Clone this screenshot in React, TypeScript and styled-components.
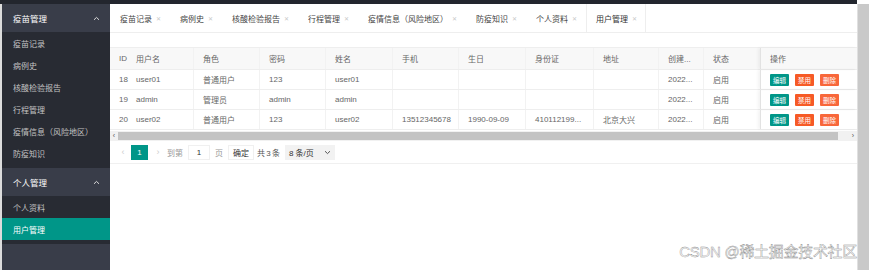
import React from 'react';
import styled, { createGlobalStyle } from 'styled-components';

const GlobalStyle = createGlobalStyle`
  html, body {
    margin: 0;
    padding: 0;
    background: #fff;
  }
  body {
    font-family: "Liberation Sans", "Noto Sans CJK SC", sans-serif;
    font-size: 8px;
    color: #666;
  }
`;

const Page = styled.div`
  width: 869px;
  height: 270px;
  overflow: hidden;
  display: flex;
  flex-direction: column;
  background: #fff;
`;

const TopBar = styled.div`
  height: 4px;
  margin-right: 12px;
  background: #23262e;
  flex: none;
`;

const Body = styled.div`
  flex: 1;
  display: flex;
  min-height: 0;
`;

const Sidebar = styled.div`
  width: 108px;
  border-left: 2px solid #dcdcdc;
  background: #393d49;
  flex: none;
`;

const NavHeader = styled.div`
  height: 28px;
  display: flex;
  align-items: center;
  justify-content: space-between;
  padding: 0 10px 0 11px;
  color: #fff;
  font-size: 8.5px;
  background: #393d49;
`;

const NavList = styled.div`
  background: #282b33;
  padding-bottom: 4px;
`;

const NavItem = styled.div<{ $active?: boolean }>`
  height: 22px;
  display: flex;
  align-items: center;
  padding-left: 11px;
  font-size: 8px;
  color: ${p => (p.$active ? '#fff' : '#c2c2c2')};
  background: ${p => (p.$active ? '#009688' : 'transparent')};
`;

const Main = styled.div`
  position: relative;
  flex: 1;
  display: flex;
  flex-direction: column;
  min-width: 0;
`;

const TabBar = styled.div`
  height: 28px;
  display: flex;
  align-items: stretch;
  border-bottom: 1px solid #eee;
  background: #fff;
`;

const Tab = styled.div<{ $active?: boolean }>`
  display: flex;
  align-items: center;
  gap: 4px;
  padding: 0 8px 0 9px;
  color: ${p => (p.$active ? '#333' : '#444')};
  background: #fff;
  border-left: 1px solid ${p => (p.$active ? '#eee' : 'transparent')};
  border-right: 1px solid ${p => (p.$active ? '#eee' : 'transparent')};
  white-space: nowrap;
`;

const TabClose = styled.span`
  color: #c8c8c8;
  font-size: 6px;
`;

const TableWrap = styled.div`
  margin-top: 14px;
`;

const cols = '25px 58px 66px 66px 67px 66px 67px 68px 65px 45px 57px 97px';

const Row = styled.div<{ $head?: boolean }>`
  display: grid;
  grid-template-columns: ${cols};
  height: ${p => (p.$head ? '21px' : '19px')};
  border-top: ${p => (p.$head ? '1px solid #eee' : 'none')};
  border-bottom: 1px solid #eee;
  background: ${p => (p.$head ? '#f8f8f8' : '#fff')};
`;

const Cell = styled.div<{ $fixed?: boolean; $first?: boolean; $second?: boolean }>`
  display: flex;
  align-items: center;
  gap: 6px;
  padding-left: ${p => (p.$second ? '1px' : '9px')};
  white-space: nowrap;
  color: #666;
  border-left: ${p =>
    p.$fixed ? '1px solid #e2e2e2' : p.$first || p.$second ? 'none' : '1px solid #f2f2f2'};
  box-shadow: ${p => (p.$fixed ? '-2px 0 3px rgba(0,0,0,0.05)' : 'none')};
`;

const OpBtn = styled.span<{ $color: string }>`
  width: 19px;
  height: 12px;
  display: flex;
  align-items: center;
  justify-content: center;
  background: ${p => p.$color};
  color: #fff;
  font-size: 6.5px;
  border-radius: 1px;
`;

const HScroll = styled.div`
  height: 10px;
  margin-top: 1px;
  display: flex;
  align-items: center;
  background: #f1f1f1;
`;

const ScrollArrow = styled.span`
  width: 8px;
  text-align: center;
  font-size: 7px;
  color: #555;
  line-height: 10px;
`;

const ScrollThumb = styled.div`
  height: 8px;
  width: 720px;
  background: #c3c3c3;
`;

const ScrollTrack = styled.div`
  flex: 1;
`;

const Pager = styled.div`
  height: 22px;
  display: flex;
  align-items: center;
  padding-left: 9px;
  border-bottom: 1px solid #f0f0f0;
  color: #999;
`;

const PagerArrow = styled.span`
  color: #ccc;
  font-size: 9px;
  width: 8px;
  text-align: center;
`;

const PageNum = styled.span`
  width: 17px;
  height: 15px;
  margin: 0 6px 0 4px;
  display: flex;
  align-items: center;
  justify-content: center;
  background: #009688;
  color: #fff;
`;

const PagerText = styled.span<{ $dark?: boolean }>`
  margin: 0 ${p => (p.$dark ? '2px' : '5px')};
  color: ${p => (p.$dark ? '#555' : '#999')};
  word-spacing: ${p => (p.$dark ? '-1px' : 'normal')};
`;

const PagerBox = styled.span`
  width: 22px;
  height: 15px;
  display: flex;
  align-items: center;
  justify-content: center;
  border: 1px solid #f0f0f0;
  box-sizing: border-box;
  color: #333;
`;

const PagerBtn = styled.span`
  width: 26px;
  height: 15px;
  display: flex;
  align-items: center;
  justify-content: center;
  border: 1px solid #f0f0f0;
  box-sizing: border-box;
  color: #333;
  margin-right: 1px;
`;

const Select = styled.span`
  width: 50px;
  height: 15px;
  margin-left: 3px;
  display: flex;
  align-items: center;
  justify-content: space-between;
  padding: 0 4px;
  box-sizing: border-box;
  background: #f2f2f2;
  color: #333;
`;

const VScroll = styled.div`
  width: 12px;
  flex: none;
  background: #c9c9c9;
  border-left: 1px solid #e0e0e0;
  box-sizing: border-box;
`;

const Watermark = styled.div`
  position: absolute;
  right: 0;
  bottom: 9px;
  font-size: 15px;
  font-family: "Liberation Sans", "Noto Sans CJK SC", sans-serif;
  color: rgba(255, 255, 255, 0.85);
  -webkit-text-stroke: 0.4px #888;
  letter-spacing: -0.3px;
  white-space: nowrap;
`;

const Chevron = ({ down }: { down?: boolean }) => (
  <svg width="7" height="5" viewBox="0 0 7 5">
    <path
      d={down ? 'M1 1.2 L3.5 3.6 L6 1.2' : 'M1 3.8 L3.5 1.4 L6 3.8'}
      fill="none"
      stroke={down ? '#555' : '#ddd'}
      strokeWidth="1"
    />
  </svg>
);

const tabs = ['疫苗记录', '病例史', '核酸检验报告', '行程管理', '疫情信息（风险地区）', '防疫知识', '个人资料', '用户管理'];

const heads = ['ID', '用户名', '角色', '密码', '姓名', '手机', '生日', '身份证', '地址', '创建...', '状态'];

const rows = [
  ['18', 'user01', '普通用户', '123', 'user01', '', '', '', '', '2022...', '启用'],
  ['19', 'admin', '管理员', 'admin', 'admin', '', '', '', '', '2022...', '启用'],
  ['20', 'user02', '普通用户', '123', 'user02', '13512345678', '1990-09-09', '410112199...', '北京大兴', '2022...', '启用'],
];

export default function App() {
  return (
    <>
      <GlobalStyle />
      <Page>
        <TopBar />
        <Body>
          <Sidebar>
            <NavHeader>
              <span>疫苗管理</span>
              <Chevron />
            </NavHeader>
            <NavList>
              <NavItem>疫苗记录</NavItem>
              <NavItem>病例史</NavItem>
              <NavItem>核酸检验报告</NavItem>
              <NavItem>行程管理</NavItem>
              <NavItem>疫情信息（风险地区）</NavItem>
              <NavItem>防疫知识</NavItem>
            </NavList>
            <NavHeader>
              <span>个人管理</span>
              <Chevron />
            </NavHeader>
            <NavList>
              <NavItem>个人资料</NavItem>
              <NavItem $active>用户管理</NavItem>
            </NavList>
          </Sidebar>

          <Main>
            <TabBar>
              {tabs.map((t, i) => (
                <Tab key={t} $active={i === tabs.length - 1}>
                  <span>{t}</span>
                  <TabClose>✕</TabClose>
                </Tab>
              ))}
            </TabBar>

            <TableWrap>
              <Row $head>
                {heads.map((h, i) => (
                  <Cell key={h} $first={i === 0} $second={i === 1}>{h}</Cell>
                ))}
                <Cell $fixed>操作</Cell>
              </Row>
              {rows.map(r => (
                <Row key={r[0]}>
                  {r.map((v, i) => (
                    <Cell key={i} $first={i === 0} $second={i === 1}>{v}</Cell>
                  ))}
                  <Cell $fixed>
                    <OpBtn $color="#009688">编辑</OpBtn>
                    <OpBtn $color="#f65a26">禁用</OpBtn>
                    <OpBtn $color="#f8673a">删除</OpBtn>
                  </Cell>
                </Row>
              ))}
              <HScroll>
                <ScrollArrow>‹</ScrollArrow>
                <ScrollThumb />
                <ScrollTrack />
                <ScrollArrow>›</ScrollArrow>
              </HScroll>
              <Pager>
                <PagerArrow>‹</PagerArrow>
                <PageNum>1</PageNum>
                <PagerArrow>›</PagerArrow>
                <PagerText>到第</PagerText>
                <PagerBox>1</PagerBox>
                <PagerText>页</PagerText>
                <PagerBtn>确定</PagerBtn>
                <PagerText $dark>共 3 条</PagerText>
                <Select>
                  <span>8 条/页</span>
                  <Chevron down />
                </Select>
              </Pager>
            </TableWrap>

            <Watermark>CSDN @稀土掘金技术社区</Watermark>
          </Main>

          <VScroll />
        </Body>
      </Page>
    </>
  );
}
